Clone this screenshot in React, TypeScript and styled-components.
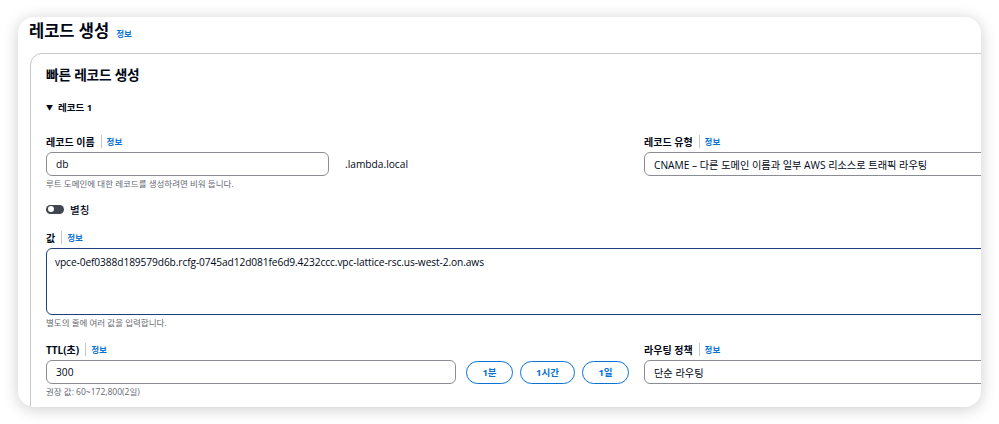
import React from 'react'
import styled, { createGlobalStyle } from 'styled-components'

const GlobalStyle = createGlobalStyle`
    html, body {
        margin: 0;
        padding: 0;
        background: #ffffff;
    }
    body {
        font-family: 'Open Sans', 'Noto Sans CJK KR', sans-serif;
        color: #000716;
    }
    * {
        box-sizing: border-box;
    }
`

export default function App() {
    return (
        <Page>
            <GlobalStyle />
            <Card>
                <TitleRow>
                    <Title>레코드 생성</Title>
                    <Info>정보</Info>
                </TitleRow>
                <Panel>
                    <PanelTitle>빠른 레코드 생성</PanelTitle>
                    <Expander>
                        <Caret>▼</Caret>
                        <span>레코드 1</span>
                    </Expander>
                    <Grid>
                        <Field>
                            <FieldLabel label="레코드 이름" />
                            <InputRow>
                                <Input $width={283}>db</Input>
                                <Suffix>.lambda.local</Suffix>
                            </InputRow>
                            <Help>루트 도메인에 대한 레코드를 생성하려면 비워 둡니다.</Help>
                        </Field>
                        <Field>
                            <FieldLabel label="레코드 유형" />
                            <Select>CNAME – 다른 도메인 이름과 일부 AWS 리소스로 트래픽 라우팅</Select>
                        </Field>
                        <ToggleRow>
                            <Toggle>
                                <Knob />
                            </Toggle>
                            <span>별칭</span>
                        </ToggleRow>
                        <WideField>
                            <FieldLabel label="값" />
                            <TextArea>vpce-0ef0388d189579d6b.rcfg-0745ad12d081fe6d9.4232ccc.vpc-lattice-rsc.us-west-2.on.aws</TextArea>
                            <Help>별도의 줄에 여러 값을 입력합니다.</Help>
                        </WideField>
                        <Field $top={13}>
                            <FieldLabel label="TTL(초)" />
                            <InputRow>
                                <Input $width={410}>300</Input>
                                <Buttons>
                                    <Pill $width={47}>1분</Pill>
                                    <Pill $width={55}>1시간</Pill>
                                    <Pill $width={47}>1일</Pill>
                                </Buttons>
                            </InputRow>
                            <Help>권장 값: 60~172,800(2일)</Help>
                        </Field>
                        <Field $top={13}>
                            <FieldLabel label="라우팅 정책" />
                            <Select>단순 라우팅</Select>
                        </Field>
                    </Grid>
                </Panel>
            </Card>
        </Page>
    )
}

function FieldLabel({ label }: { label: string }) {
    return (
        <LabelRow>
            <LabelText>{label}</LabelText>
            <Divider />
            <Info>정보</Info>
        </LabelRow>
    )
}

const Page = styled.div`
    padding: 17px 18px;
    width: 999px;
    height: 424px;
`

const Card = styled.div`
    width: 963px;
    height: 390px;
    border-radius: 16px;
    background: #fff;
    overflow: hidden;
    box-shadow: 0 2px 16px rgba(0, 0, 0, 0.2);
    padding-left: 11px;
`

const TitleRow = styled.div`
    display: flex;
    align-items: baseline;
    gap: 7px;
    height: 36px;
    padding-top: 3px;
`

const Title = styled.h1`
    margin: 0;
    font-size: 16.5px;
    font-weight: 700;
    line-height: 22px;
`

const Info = styled.span`
    font-size: 8.5px;
    font-weight: 700;
    color: #0972d3;
`

const Panel = styled.div`
    width: 1240px;
    min-height: 400px;
    margin-left: 1px;
    border: 1px solid #c6c6cd;
    border-radius: 12px;
    padding: 11px 0 0 15px;
`

const PanelTitle = styled.h2`
    margin: 0;
    font-size: 13.7px;
    font-weight: 700;
    line-height: 20px;
    letter-spacing: -0.2px;
`

const Expander = styled.div`
    display: flex;
    align-items: center;
    gap: 5px;
    margin-top: 15px;
    height: 14px;
    font-size: 9.5px;
    font-weight: 700;
`

const Caret = styled.span`
    font-size: 7px;
`

const Grid = styled.div`
    display: grid;
    grid-template-columns: 583px 583px;
    column-gap: 15px;
    margin-top: 20px;
`

const Field = styled.div<{ $top?: number }>`
    display: flex;
    flex-direction: column;
    margin-top: ${(p) => p.$top || 0}px;
`

const WideField = styled(Field)`
    grid-column: 1 / -1;
    margin-top: 16px;
`

const LabelRow = styled.div`
    display: flex;
    align-items: center;
    height: 14px;
    margin-bottom: 4px;
`

const LabelText = styled.span`
    font-size: 10px;
    font-weight: 700;
`

const Divider = styled.span`
    width: 1px;
    height: 13px;
    background: #c6c6cd;
    margin: 0 5px 0 6px;
`

const InputRow = styled.div`
    display: flex;
    align-items: center;
`

const Input = styled.div<{ $width: number }>`
    width: ${(p) => p.$width}px;
    height: 24px;
    border: 1px solid #8c8c94;
    border-radius: 6px;
    padding: 0 9px;
    display: flex;
    align-items: center;
    font-size: 10.2px;
`

const Select = styled(Input).attrs({ $width: 583 })``

const Suffix = styled.span`
    margin-left: 16px;
    font-size: 10.2px;
`

const Help = styled.div`
    margin-top: 2px;
    font-size: 8.5px;
    line-height: 12px;
    color: #656871;
`

const ToggleRow = styled.div`
    grid-column: 1 / -1;
    display: flex;
    align-items: center;
    gap: 6px;
    margin-top: 14px;
    height: 10px;
    font-size: 10.5px;
    font-weight: 500;
`

const Toggle = styled.div`
    width: 18px;
    height: 9px;
    border-radius: 5px;
    background: #424650;
    padding: 1.5px;
    display: flex;
`

const Knob = styled.div`
    width: 6px;
    height: 6px;
    border-radius: 50%;
    background: #fff;
`

const TextArea = styled.div`
    height: 67px;
    border: 1.5px solid #1f3f7f;
    border-radius: 6px;
    padding: 6px 8px;
    font-size: 10.2px;
    line-height: 14px;
    letter-spacing: -0.1px;
`

const Buttons = styled.div`
    display: flex;
    gap: 7px;
    margin-left: 10px;
`

const Pill = styled.div<{ $width: number }>`
    width: ${(p) => p.$width}px;
    height: 23px;
    border: 1.5px solid #0972d3;
    border-radius: 12px;
    display: flex;
    align-items: center;
    justify-content: center;
    color: #0972d3;
    font-size: 9.5px;
    font-weight: 700;
`
